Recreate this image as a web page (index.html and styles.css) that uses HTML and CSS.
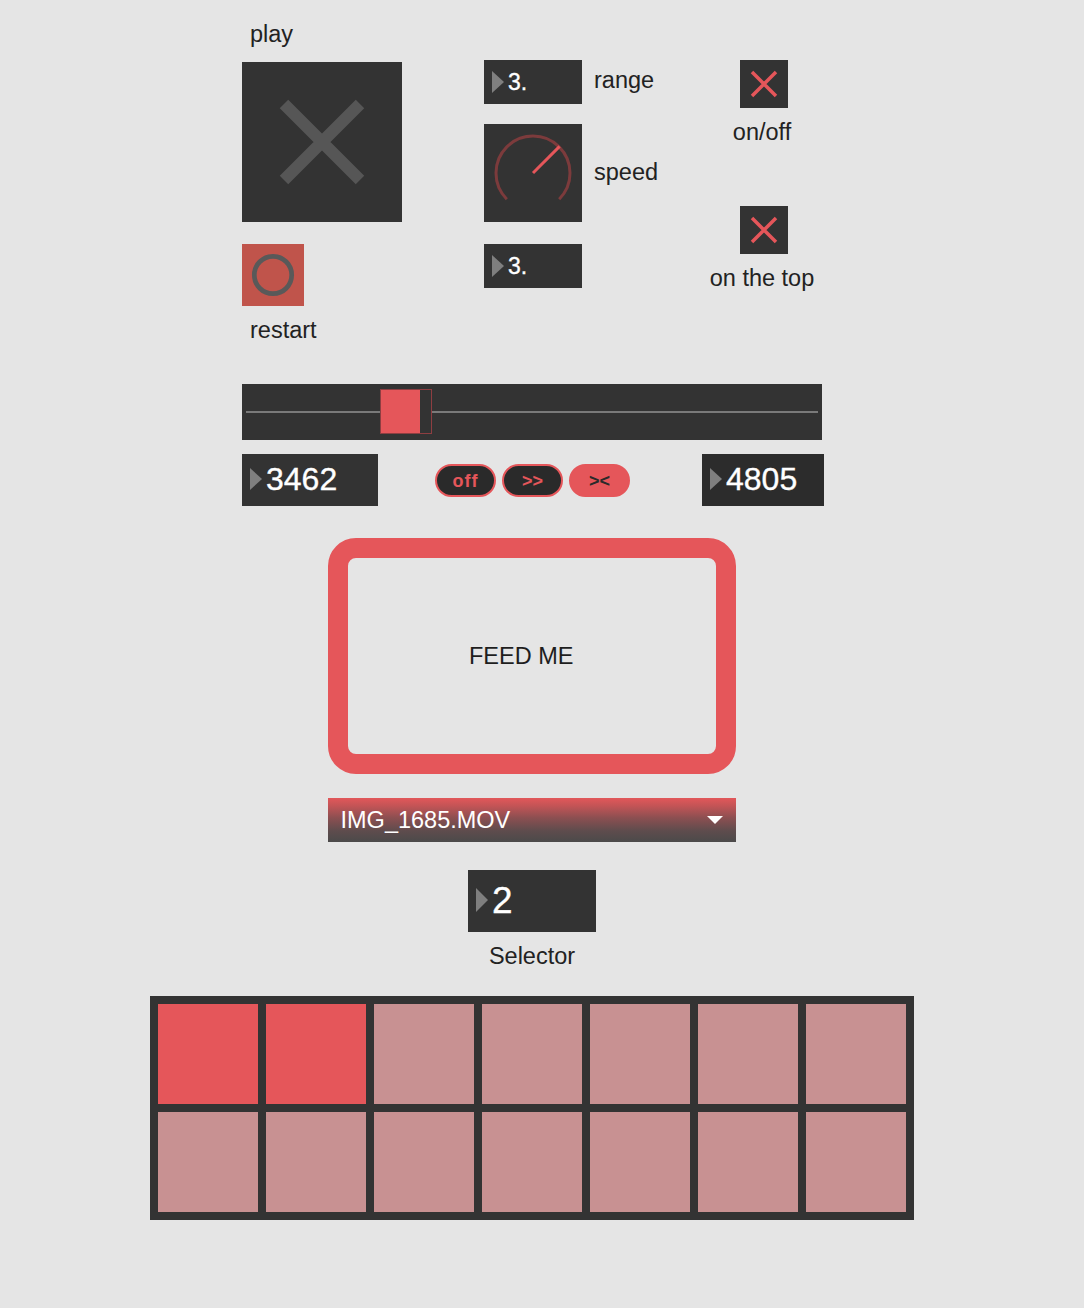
FILE: index.html
```html
<!DOCTYPE html>
<html lang="en">
<head>
<meta charset="utf-8">
<title>Patch</title>
<link rel="stylesheet" href="styles.css">
</head>
<body>
<div class="patch">
  <section class="top">
    <div class="col col-play">
      <div class="label label-play">play</div>
      <div class="play-box">
        <svg width="160" height="160" viewBox="0 0 160 160"><path d="M42 42 L118 118 M118 42 L42 118" stroke="#565656" stroke-width="12" fill="none"/></svg>
      </div>
      <div class="restart-btn">
        <svg width="62" height="62" viewBox="0 0 62 62"><circle cx="31" cy="31" r="18.7" stroke="#595959" stroke-width="4.7" fill="none"/></svg>
      </div>
      <div class="label label-restart">restart</div>
    </div>

    <div class="col col-params">
      <div class="param-row">
        <div class="numbox numbox-sm"><span class="tri"></span><span class="num">3.</span></div>
        <div class="label range-label">range</div>
      </div>
      <div class="param-row dial-row">
        <div class="dial">
          <svg width="98" height="98" viewBox="0 0 98 98">
            <path d="M22.8 75.2 A37 37 0 1 1 75.2 75.2" stroke="#7c3b3c" stroke-width="3" fill="none"/>
            <path d="M49 49 L75.6 22.4" stroke="#e5565a" stroke-width="3" fill="none"/>
          </svg>
        </div>
        <div class="label speed-label">speed</div>
      </div>
      <div class="param-row last-row">
        <div class="numbox numbox-sm"><span class="tri"></span><span class="num">3.</span></div>
      </div>
    </div>

    <div class="col col-toggles">
      <div class="toggle">
        <svg width="48" height="48" viewBox="0 0 48 48"><path d="M12 12 L36 36 M36 12 L12 36" stroke="#e5565a" stroke-width="3.5" fill="none"/></svg>
      </div>
      <div class="label toggle-label">on/off</div>
      <div class="toggle toggle-2">
        <svg width="48" height="48" viewBox="0 0 48 48"><path d="M12 12 L36 36 M36 12 L12 36" stroke="#e5565a" stroke-width="3.5" fill="none"/></svg>
      </div>
      <div class="label toggle-label">on the top</div>
    </div>
  </section>

  <div class="slider">
    <div class="slider-track"></div>
    <div class="slider-knob"></div>
  </div>

  <div class="transport">
    <div class="numbox numbox-lg"><span class="tri"></span><span class="num">3462</span></div>
    <div class="btns">
      <div class="btn btn-off">off</div>
      <div class="btn">&gt;&gt;</div>
      <div class="btn btn-active">&gt;&lt;</div>
    </div>
    <div class="numbox numbox-lg numbox-right"><span class="tri"></span><span class="num">4805</span></div>
  </div>

  <div class="feed"><span>FEED ME</span></div>

  <div class="menu">
    <span class="menu-text">IMG_1685.MOV</span>
    <span class="caret"></span>
  </div>

  <div class="selector">
    <div class="numbox numbox-sel"><span class="tri tri-sel"></span><span class="num">2</span></div>
    <div class="label sel-label">Selector</div>
  </div>

  <div class="matrix">
    <div class="cell on"></div>
    <div class="cell on"></div>
    <div class="cell"></div>
    <div class="cell"></div>
    <div class="cell"></div>
    <div class="cell"></div>
    <div class="cell"></div>
    <div class="cell"></div>
    <div class="cell"></div>
    <div class="cell"></div>
    <div class="cell"></div>
    <div class="cell"></div>
    <div class="cell"></div>
    <div class="cell"></div>
  </div>
</div>
</body>
</html>
```

FILE: styles.css
```css
* { box-sizing: border-box; }

html, body {
  margin: 0;
  padding: 0;
  background: #e5e5e5;
}

body {
  font-family: "Liberation Sans", Arial, sans-serif;
  color: #222;
  width: 1084px;
  min-height: 1308px;
}

svg { display: block; }

.label {
  font-size: 23.5px;
  line-height: 27px;
  white-space: nowrap;
}

/* ---------- top area ---------- */
.top {
  display: flex;
  height: 384px;
  padding-left: 242px;
}

.col-play {
  width: 242px;
  display: flex;
  flex-direction: column;
  align-items: flex-start;
  padding-top: 21px;
}

.label-play { margin-left: 8px; }

.play-box {
  margin-top: 14px;
  width: 160px;
  height: 160px;
  background: #333;
}

.restart-btn {
  margin-top: 22px;
  width: 62px;
  height: 62px;
  background: #c0544b;
}

.label-restart {
  margin-top: 11px;
  margin-left: 8px;
}

.col-params {
  width: 220px;
  padding-top: 60px;
  display: flex;
  flex-direction: column;
}

.param-row {
  display: flex;
  align-items: flex-start;
  gap: 12px;
}

.range-label { margin-top: 6.5px; }

.dial-row { margin-top: 20px; }

.dial {
  width: 98px;
  height: 98px;
  background: #333;
}

.speed-label { margin-top: 35px; }

.last-row { margin-top: 22px; }

.col-toggles {
  width: 116px;
  padding-top: 60px;
  display: flex;
  flex-direction: column;
  align-items: center;
}

.toggle {
  width: 48px;
  height: 48px;
  background: #333;
  margin-left: 4px;
}

.toggle-label { margin-top: 10.5px; }

.toggle-2 { margin-top: 60.5px; }

/* ---------- number boxes ---------- */
.numbox {
  display: flex;
  align-items: center;
  padding-left: 8px;
  background: #333;
  color: #fff;
}

.tri {
  width: 0;
  height: 0;
  border-left: 12px solid #7f7f7f;
  border-top: 11px solid transparent;
  border-bottom: 11px solid transparent;
  margin-right: 4px;
}

.num {
  line-height: 1;
  -webkit-text-stroke: 0.35px #fff;
}

.numbox-sm {
  width: 98px;
  height: 44px;
  font-size: 23px;
}

.numbox-lg {
  width: 136px;
  height: 52px;
  font-size: 32px;
  padding-bottom: 3px;
}

.numbox-right {
  width: 122px;
  margin-left: 72px;
  background: #2c2c2c;
}

.numbox-sel {
  width: 128px;
  height: 62px;
  font-size: 37px;
  padding-bottom: 2px;
}

.tri-sel {
  border-top-width: 12.5px;
  border-bottom-width: 12.5px;
}

/* ---------- slider ---------- */
.slider {
  position: relative;
  margin-left: 242px;
  width: 580px;
  height: 56px;
  background: #333;
  padding: 27px 4px 0;
}

.slider-track {
  height: 2px;
  background: #7a7a7a;
}

.slider-knob {
  position: absolute;
  left: 138px;
  top: 5px;
  width: 52px;
  height: 45px;
  border: 1px solid #8e3e41;
  background: linear-gradient(to right, #e5565a 0, #e5565a 39px, #333 39px, #333 100%);
}

/* ---------- transport row ---------- */
.transport {
  display: flex;
  align-items: flex-start;
  margin: 14px 0 0 242px;
}

.btns {
  display: flex;
  gap: 6px;
  margin-left: 57px;
  margin-top: 9.5px;
}

.btn {
  width: 61px;
  height: 33px;
  border-radius: 17px;
  border: 2px solid #e5565a;
  background: #2a2a2a;
  color: #e5565a;
  font-weight: bold;
  font-size: 18px;
  display: flex;
  align-items: center;
  justify-content: center;
  padding-top: 3px;
}

.btn-off { letter-spacing: 1px; }

.btn-active {
  background: #e5565a;
  color: #2a2a2a;
}

/* ---------- feed box ---------- */
.feed {
  margin: 32px 0 0 328px;
  width: 408px;
  height: 236px;
  border: 20px solid #e5565a;
  border-radius: 28px;
  display: flex;
  align-items: center;
  padding-left: 121px;
  font-size: 23.5px;
  color: #1e1e1e;
}

/* ---------- menu ---------- */
.menu {
  margin: 24px 0 0 328px;
  width: 408px;
  height: 44px;
  background: linear-gradient(to bottom, #e2575a 0%, #c35456 18%, #8c4f51 45%, #5e4c4d 75%, #4b4a4a 100%);
  display: flex;
  align-items: center;
  justify-content: space-between;
  padding: 0 13px 0 12.5px;
  color: #fff;
  font-size: 23.5px;
}

.caret {
  width: 0;
  height: 0;
  border-top: 8.5px solid #fff;
  border-left: 8.5px solid transparent;
  border-right: 8.5px solid transparent;
  margin-bottom: 1px;
}

/* ---------- selector ---------- */
.selector {
  margin: 28px 0 0 468px;
  width: 128px;
  display: flex;
  flex-direction: column;
  align-items: center;
}

.sel-label { margin-top: 11px; }

/* ---------- matrix ---------- */
.matrix {
  margin: 26px 0 0 150px;
  display: grid;
  grid-template-columns: repeat(7, 100px);
  grid-auto-rows: 100px;
  gap: 8px;
  padding: 8px;
  background: #333;
  width: max-content;
}

.cell { background: #c89192; }
.cell.on { background: #e5565a; }
```
